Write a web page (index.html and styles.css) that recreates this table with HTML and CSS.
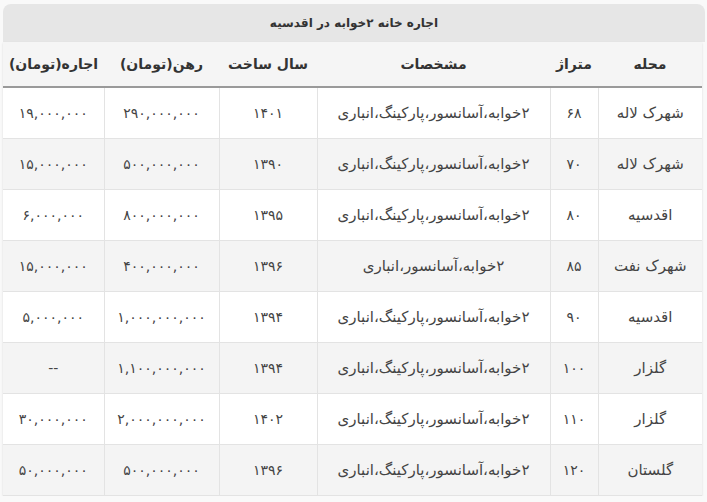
FILE: index.html
```html
<!DOCTYPE html>
<html lang="fa" dir="rtl">
<head>
<meta charset="utf-8">
<link rel="stylesheet" href="styles.css">
</head>
<body>
<div class="wrap">
  <div class="caption">اجاره خانه ۲خوابه در اقدسیه</div>
  <table class="grid">
    <colgroup>
      <col class="c-area">
      <col class="c-size">
      <col class="c-desc">
      <col class="c-year">
      <col class="c-rahn">
      <col class="c-rent">
    </colgroup>
    <thead>
      <tr><th>محله</th><th>متراژ</th><th>مشخصات</th><th>سال ساخت</th><th>رهن(تومان)</th><th>اجاره(تومان)</th></tr>
    </thead>
    <tbody>
      <tr><td>شهرک لاله</td><td class="num">۶۸</td><td>۲خوابه،آسانسور،پارکینگ،انباری</td><td class="num">۱۴۰۱</td><td class="num">۲۹۰,۰۰۰,۰۰۰</td><td class="num">۱۹,۰۰۰,۰۰۰</td></tr>
      <tr><td>شهرک لاله</td><td class="num">۷۰</td><td>۲خوابه،آسانسور،پارکینگ،انباری</td><td class="num">۱۳۹۰</td><td class="num">۵۰۰,۰۰۰,۰۰۰</td><td class="num">۱۵,۰۰۰,۰۰۰</td></tr>
      <tr><td>اقدسیه</td><td class="num">۸۰</td><td>۲خوابه،آسانسور،پارکینگ،انباری</td><td class="num">۱۳۹۵</td><td class="num">۸۰۰,۰۰۰,۰۰۰</td><td class="num">۶,۰۰۰,۰۰۰</td></tr>
      <tr><td>شهرک نفت</td><td class="num">۸۵</td><td>۲خوابه،آسانسور،انباری</td><td class="num">۱۳۹۶</td><td class="num">۴۰۰,۰۰۰,۰۰۰</td><td class="num">۱۵,۰۰۰,۰۰۰</td></tr>
      <tr><td>اقدسیه</td><td class="num">۹۰</td><td>۲خوابه،آسانسور،پارکینگ،انباری</td><td class="num">۱۳۹۴</td><td class="num">۱,۰۰۰,۰۰۰,۰۰۰</td><td class="num">۵,۰۰۰,۰۰۰</td></tr>
      <tr><td>گلزار</td><td class="num">۱۰۰</td><td>۲خوابه،آسانسور،پارکینگ،انباری</td><td class="num">۱۳۹۴</td><td class="num">۱,۱۰۰,۰۰۰,۰۰۰</td><td class="num">--</td></tr>
      <tr><td>گلزار</td><td class="num">۱۱۰</td><td>۲خوابه،آسانسور،پارکینگ،انباری</td><td class="num">۱۴۰۲</td><td class="num">۲,۰۰۰,۰۰۰,۰۰۰</td><td class="num">۳۰,۰۰۰,۰۰۰</td></tr>
      <tr><td>گلستان</td><td class="num">۱۲۰</td><td>۲خوابه،آسانسور،پارکینگ،انباری</td><td class="num">۱۳۹۶</td><td class="num">۵۰۰,۰۰۰,۰۰۰</td><td class="num">۵۰,۰۰۰,۰۰۰</td></tr>
    </tbody>
  </table>
</div>
</body>
</html>
```

FILE: styles.css
```css
html, body {
  margin: 0;
  padding: 0;
  background: #f9f9f9;
}
body {
  font-family: "DejaVu Sans", "Noto Sans", sans-serif;
  color: #333;
}
.wrap {
  width: 702px;
  padding: 4px 2px 0 3px;
  direction: rtl;
}
.caption {
  height: 38px;
  line-height: 38px;
  background: #e6e6e6;
  border-radius: 8px 8px 0 0;
  text-align: center;
  font-weight: bold;
  font-size: 12px;
  color: #333;
}
.grid {
  width: 699px;
  margin-right: 3px;
  border-collapse: collapse;
  table-layout: fixed;
  background: #fff;
  box-shadow: 0 1px 2px rgba(0,0,0,0.12);
}
.c-area { width: 104px; }
.c-size { width: 48px; }
.c-desc { width: 233px; }
.c-year { width: 98px; }
.c-rahn { width: 115px; }
.c-rent { width: 101px; }
.grid th {
  height: 44px;
  background: #f5f5f5;
  font-weight: bold;
  font-size: 14px;
  color: #333;
  text-align: center;
  padding: 0;
  border-bottom: 2px solid #9a9a9a;
}
.grid td {
  height: 50px;
  padding: 0;
  text-align: center;
  font-size: 15px;
  color: #444;
  border: 1px solid #e3e3e3;
}
.grid td.num {
  font-size: 14px;
}
.grid tbody tr:nth-child(even) td {
  background: #f4f4f4;
}
.grid tbody tr:first-child td { border-top: none; }
.grid td:first-child { border-right: none; }
.grid td:last-child { border-left: none; }
```
